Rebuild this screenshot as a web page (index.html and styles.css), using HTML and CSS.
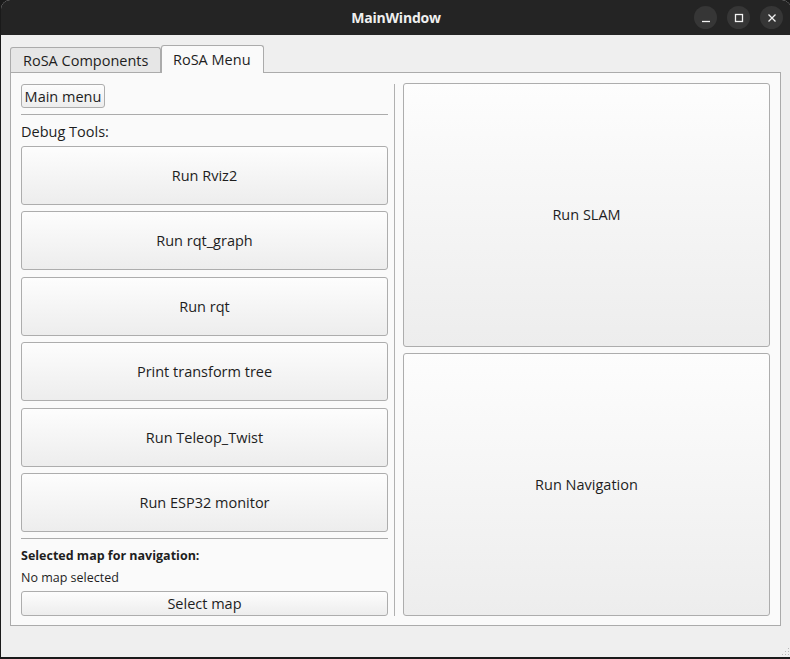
FILE: index.html
```html
<!DOCTYPE html>
<html>
<head>
<meta charset="utf-8">
<title>MainWindow</title>
<link rel="stylesheet" href="styles.css">
</head>
<body>
<div class="window">
  <header class="titlebar">
    <div class="title">MainWindow</div>
    <div class="controls">
      <span class="ctl"><svg width="10" height="10" viewBox="0 0 10 10"><path d="M1 8.5h8" stroke="#f2f2f2" stroke-width="1.3"/></svg></span>
      <span class="ctl"><svg width="10" height="10" viewBox="0 0 10 10"><rect x="1.5" y="1.5" width="7" height="7" fill="none" stroke="#f2f2f2" stroke-width="1.3"/></svg></span>
      <span class="ctl"><svg width="10" height="10" viewBox="0 0 10 10"><path d="M1.5 1.5l7 7M8.5 1.5l-7 7" stroke="#f2f2f2" stroke-width="1.3"/></svg></span>
    </div>
  </header>
  <main class="content">
    <div class="tabs">
      <div class="tab">RoSA Components</div>
      <div class="tab active">RoSA Menu</div>
    </div>
    <section class="pane">
      <div class="left">
        <button class="btn small">Main menu</button>
        <div class="hline first"></div>
        <div class="label">Debug Tools:</div>
        <div class="tools">
          <button class="btn big">Run Rviz2</button>
          <button class="btn big">Run rqt_graph</button>
          <button class="btn big">Run rqt</button>
          <button class="btn big">Print transform tree</button>
          <button class="btn big">Run Teleop_Twist</button>
          <button class="btn big">Run ESP32 monitor</button>
        </div>
        <div class="hline second"></div>
        <div class="label bold">Selected map for navigation:</div>
        <div class="label small-text">No map selected</div>
        <button class="btn wide">Select map</button>
      </div>
      <div class="vsep"></div>
      <div class="right">
        <button class="btn big">Run SLAM</button>
        <button class="btn big">Run Navigation</button>
      </div>
    </section>
  </main>
  <svg class="grip" width="9" height="9" viewBox="0 0 9 9">
    <g fill="#b8b8b8">
      <rect x="7" y="1" width="1" height="1"/>
      <rect x="4" y="4" width="1" height="1"/><rect x="7" y="4" width="1" height="1"/>
      <rect x="1" y="7" width="1" height="1"/><rect x="4" y="7" width="1" height="1"/><rect x="7" y="7" width="1" height="1"/>
    </g>
  </svg>
</div>
</body>
</html>
```
FILE: styles.css
```css
* { box-sizing: border-box; }
html, body { margin: 0; padding: 0; }
body {
  width: 790px;
  height: 659px;
  overflow: hidden;
  background: #1a1a1a;
  font-family: "Open Sans", "Noto Sans", sans-serif;
  color: #1e1e1e;
}
.window {
  position: relative;
  width: 790px;
  height: 657px;
  margin-left: 1px;
  background: #efefef;
  display: flex;
  flex-direction: column;
  border-top-left-radius: 9px;
  border-top-right-radius: 9px;
  overflow: hidden;
}
.titlebar {
  height: 35px;
  flex: none;
  background: #242424;
  position: relative;
  display: flex;
  align-items: center;
  justify-content: center;
}
.title {
  color: #efefef;
  font-weight: 700;
  font-size: 14px;
  letter-spacing: -0.2px;
}
.controls {
  position: absolute;
  right: 8px;
  top: 6px;
  display: flex;
  gap: 10px;
}
.ctl {
  width: 23px;
  height: 23px;
  border-radius: 50%;
  background: #363636;
  display: flex;
  align-items: center;
  justify-content: center;
}
.content {
  flex: 1;
  padding: 10px 0 0 9px;
}
.tabs {
  display: flex;
  align-items: flex-end;
  height: 27px;
  position: relative;
  z-index: 1;
}
.tab {
  height: 25px;
  padding: 0 11px 0 12px;
  width: 151px;
  border: 1px solid #ababab;
  border-bottom: none;
  border-radius: 3px 3px 0 0;
  background: #e6e6e6;
  font-size: 14.5px;
  display: flex;
  align-items: center;
}
.tab.active {
  width: 103px;
  height: 28px;
  background: #fafafa;
  margin-bottom: -1px;
  padding: 0 10px 1px 11px;
}
.pane {
  width: 771px;
  height: 554px;
  border: 1px solid #ababab;
  background: #fafafa;
  padding: 10px 10px 9px 10px;
  display: flex;
}
.left {
  width: 367px;
  flex: none;
  display: flex;
  flex-direction: column;
  padding-top: 1px;
}
.right {
  flex: 1;
  display: flex;
  flex-direction: column;
  gap: 6px;
}
.vsep {
  width: 1px;
  margin: 1px 8px 0 6px;
  background: #b0b0b0;
}
.btn {
  font-family: inherit;
  color: #1e1e1e;
  border: 1px solid #adadad;
  border-radius: 3px;
  background: linear-gradient(#fdfdfd, #ededed);
  font-size: 14.5px;
  padding: 0;
  margin: 0;
}
.btn.small {
  width: 84px;
  height: 24px;
  font-size: 14.5px;
  align-self: flex-start;
}
.btn.big { flex: 1; }
.btn.wide {
  height: 25px;
  margin-top: 5px;
}
.hline { height: 1px; background: #ababab; flex: none; }
.hline.first { margin-top: 6px; }
.hline.second { margin-top: 6px; }
.label {
  font-size: 14.5px;
  line-height: 17px;
  margin-top: 8px;
  margin-bottom: 6px;
}
.label.bold {
  font-size: 12.5px;
  font-weight: 700;
  margin-bottom: 0;
}
.label.small-text {
  font-size: 12.5px;
  margin-top: 5px;
  margin-bottom: 0;
}
.tools {
  flex: 1;
  display: flex;
  flex-direction: column;
  gap: 6.5px;
}
.grip {
  position: absolute;
  right: 1px;
  bottom: 1px;
}
```
